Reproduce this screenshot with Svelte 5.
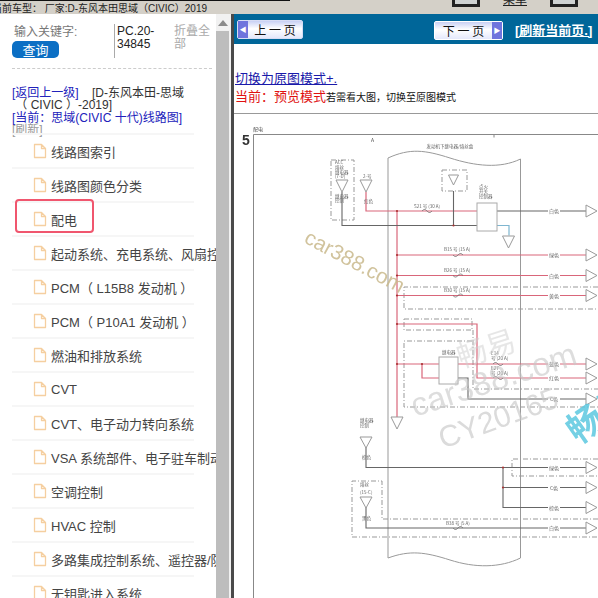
<script>
  const cjk = '"Noto Sans CJK SC"';
  const rows = [
    '线路图索引', '线路图颜色分类', '配电', '起动系统、充电系统、风扇控制系统', 'PCM（ L15B8 发动机 ）',
    'PCM（ P10A1 发动机 ）', '燃油和排放系统', 'CVT', 'CVT、电子动力转向系统', 'VSA 系统部件、电子驻车制动系统',
    '空调控制', 'HVAC 控制', '多路集成控制系统、遥控器/防盗系统', '无钥匙进入系统'
  ];
  const redRows = [
    { y: 133, l: '绿色', f: 'B15 号 (15 A)' },
    { y: 153.5, l: '白色', f: 'B26 号 (15 A)' },
    { y: 173.5, l: '黄色', f: 'B30 号 (15 A)' }
  ];
  const connectors = [89, 133, 153.5, 173.5, 242, 256, 277, 345.5, 365.5, 385.5, 406];
  const wireLabels = [
    { y: 89, t: '白色' }, { y: 133, t: '绿色' }, { y: 153.5, t: '白色' }, { y: 173.5, t: '黄色' },
    { y: 242, t: '蓝色' }, { y: 256, t: '红色' }, { y: 277, t: 'C色' }, { y: 345.5, t: '绿色' },
    { y: 365.5, t: 'C色' }, { y: 385.5, t: '棕色' }, { y: 406, t: '白色' }
  ];
  const drops = [
    [107, 58, 12, 6], [131, 58, 12, 6], [218.5, 53, 10, 5], [273.5, 114, 12, 6],
    [162, 295, 12, 6], [131, 315, 11, 6], [131, 375, 11, 6]
  ];
  const dots = [[162, 89], [218.5, 103.5], [162, 133], [162, 153.5], [162, 173.5], [162, 202], [162, 242], [187, 242], [268, 345.5], [268, 365.5]];
  const tiny = [
    [96, 42, 'ACC'], [96, 47, '熔丝'], [96, 52, '继电器'], [96, 56, '(7-D)'],
    [96, 76, '继电器'], [96, 80, '控制'], [124, 56, '2-号'], [125, 81, '红色'],
    [240, 66, '点火'], [240, 71, '开关'], [240, 76, '控制器'], [203, 232, '继电器'],
    [121, 300, '继电器'], [121, 305, '控制'], [123, 337, '棕色'], [121, 364, '熔丝'], [121, 372, '(15-C)'], [123, 398, '黑色']
  ];
</script>

<div class="page">
  <div class="topbar">
    <span class="topline"></span>
    <span class="crumb">当前车型： 厂家:D-东风本田思域（CIVIC）2019</span>
    <span class="tool"></span>
    <span class="menu">菜单</span>
    <span class="tool"></span>
  </div>

  <div class="main">
    <aside class="side">
      <div class="search">
        <div class="search-left">
          <span class="kw">输入关键字:</span>
          <button class="query">查询</button>
        </div>
        <div class="code">PC.20-34845</div>
        <div class="fold">折叠全部</div>
      </div>
      <div class="crumbs">
        <div><a href="#a" class="blue">[返回上一级]</a><span class="dark">&nbsp;&nbsp;&nbsp; [D-东风本田-思域<br />&nbsp;（ CIVIC ）-2019]</span></div>
        <div><a href="#a" class="blue">[当前：思域(CIVIC 十代)线路图]</a></div>
        <div class="refresh">[刷新]</div>
      </div>
      <ul class="list">
        {#each rows as r, i}
          <li class:current={i === 2}>
            <svg class="doc" width="14" height="16" viewBox="0 0 14 16">
              <path d="M1.500 1.500h7l4 4v9h-11z M8.500 1.500v4h4" fill="#fff" stroke="#f5cfa0" stroke-width="1.300" stroke-linejoin="round" />
            </svg>
            <span class="label">{r}</span>
          </li>
        {/each}
      </ul>
    </aside>

    <div class="scroll">
      <div class="up"><svg width="10" height="6" viewBox="0 0 10 6"><path d="M5 0l5 6H0z" fill="#8a8a8a" /></svg></div>
      <div class="thumb"></div>
    </div>
    <div class="rule"></div>

    <section class="content">
      <div class="nav">
        <div class="btn prev"><span class="arrow">◀</span><span class="btn-t">上 一 页</span></div>
        <div class="btn next"><span class="btn-t">下 一 页</span><span class="arrow">▶</span></div>
        <a class="reload" href="#a">[刷新当前页.]</a>
      </div>
      <a class="switch" href="#a">切换为原图模式+.</a>
      <div class="mode"><span class="red">当前：预览模式</span><span class="hint">若需看大图，切换至原图模式</span></div>
      <div class="hr"></div>

      <svg class="diagram" width="363" height="478" viewBox="0 0 363 478" font-family={cjk}>
        <g class="soft">
          <text x="18" y="9" font-size="5" fill="#555">配电</text>
          <text x="7" y="23" font-size="14" font-weight="700" fill="#333" font-family="Liberation Sans">5</text>
          <path d="M18.500 478V12.500H363M259 12.500v3" fill="none" stroke="#888" />
          <text x="136" y="20" font-size="5" fill="#555">A</text>
          <text x="215" y="26" font-size="4.500" fill="#666" text-anchor="middle">发动机下继电器/熔丝盒</text>

          <path d="M153 436V36C175 26 190 28 215 36S265 47 285.500 37V436C265 446 240 446 215 438S175 428 153 436z" fill="none" stroke="#999" />

          <g fill="none" stroke="#999" stroke-dasharray="5 2 1 2">
            <path d="M96 38h23v60H96z" />
            <path d="M207 48h25v21h-25z" />
            <path d="M363 165H169v22h194" />
            <path d="M169 197h68v11h-68z" />
            <path d="M238 208v59h125" />
            <path d="M237 219h-68v66h194" />
            <path d="M363 337h-86v17h86" />
            <path d="M363 397H147v-38h-30v56h246" />
          </g>

          <g fill="none" stroke="#d9667a" stroke-width="1.200">
            <path d="M131 70v19h112" />
            <path d="M162 89v206" />
            {#each redRows as r}
              <path d="M162 {r.y}H313M325 {r.y}h26" />
            {/each}
            <path d="M162 202h80v54h71M325 256h26" />
            <path d="M162 242h151M325 242h26M187 242v14h18" />
          </g>
          <g fill="none" stroke="#666" stroke-width="1.100">
            <path d="M107 70v33.500h136" />
            <path d="M218.500 69v34.500" />
            <path d="M262 89h51M325 89h26" />
            <path d="M223 256h10v21h80M325 277h26" />
            <path d="M131 325v20.500h182M325 345.500h26" />
            <path d="M268 345.500v40h45M268 365.500h45M325 365.500h26M325 385.500h26" />
            <path d="M131 385v21h182M325 406h26" />
          </g>
          <path d="M262 103.500h12v10" fill="none" stroke="#7fb6d0" stroke-width="1.200" />

          <g fill="#fff" stroke="#aaa">
            <rect x="242" y="81" width="20" height="28" />
            <rect x="204" y="235" width="19" height="27" />
          </g>

          <g fill="#fff" stroke="#999">
            {#each drops as d}
              <path d="M{d[0] - d[3]} {d[1]}h{d[3] * 2}l-{d[3]} {d[2]}z" />
            {/each}
            {#each connectors as y}
              <path d="M351 {y - 6}l11 6l-11 6z" />
            {/each}
          </g>

          <g fill="none" stroke="#666" stroke-width="0.800">
            <path d="M187 89c2-2 3-2 5 0s3 2 5 0" />
            <path d="M218 133c2 2 3 2 5 0s3-2 5 0" />
            <path d="M218 153.500c2 2 3 2 5 0s3-2 5 0" />
            <path d="M218 173.500c2 2 3 2 5 0s3-2 5 0" />
            <path d="M258 242c2-2 3-2 5 0s3 2 5 0" />
            <path d="M258 256c2-2 3-2 5 0s3 2 5 0" />
            <path d="M218 406c2 2 3 2 5 0s3-2 5 0" />
          </g>

          {#each dots as d}
            <circle cx={d[0]} cy={d[1]} r="1.100" fill="#a33" />
          {/each}

          <g font-size="4.500" fill="#666">
            <text x="179" y="86">S21 号 (30 A)</text>
            {#each redRows as r}
              <text x="209" y={r.y - 4}>{r.f}</text>
            {/each}
            <text x="256" y="233">E14</text>
            <text x="256" y="238">号 (20 A)</text>
            <text x="256" y="248">E27</text>
            <text x="256" y="253">号 (20 A)</text>
            <text x="211" y="403">B38 号 (5 A)</text>
            {#each tiny as t}
              <text x={t[0] + 4} y={t[1]}>{t[2]}</text>
            {/each}
            {#each wireLabels as w}
              <text x="319" y={w.y + 2} text-anchor="middle" font-size="5">{w.t}</text>
            {/each}
          </g>
        </g>

        <g font-family="Liberation Sans">
          <text x="68" y="120" font-size="21" fill="#c9b98c" opacity="0.850" transform="rotate(28 68 120)">car388.com</text>
          <text x="180" y="295" font-size="33" fill="#c8c8c8" opacity="0.600" transform="rotate(-18 180 295)">car388.com</text>
          <text x="208" y="327" font-size="30" fill="#c8c8c8" opacity="0.650" transform="rotate(-20 208 327)">CY20165</text>
        </g>
        <text x="226" y="246" font-size="30" fill="#cfcfcf" opacity="0.500" transform="rotate(-18 226 246)">畅易</text>
        <text x="343" y="323" font-size="36" font-weight="700" fill="#5cc8e0" opacity="0.850" transform="rotate(-35 343 323)">畅易</text>
      </svg>
    </section>
  </div>
</div>

<style>
  :global(body) { margin: 0; background: #fff; }
  .page {
    width: 598px; height: 598px; overflow: hidden; display: flex; flex-direction: column;
    font-family: "Liberation Sans", "Noto Sans CJK SC", sans-serif;
  }
  .topbar {
    height: 14px; flex: none; background: #d4d0c8; display: flex; align-items: flex-start;
    position: relative; overflow: hidden;
  }
  .topline { position: absolute; left: 0; top: 0; width: 290px; height: 1px; background: #111; }
  .crumb { font-size: 10px; line-height: 11px; padding-top: 3px; color: #222; white-space: nowrap; margin-left: -8px; width: 460px; flex: none; }
  .tool {
    width: 28px; height: 7px; background: #cfd2d2; box-sizing: border-box;
    border: 3px solid #222; border-top: 0; flex: none;
  }
  .menu { width: 70px; text-align: center; font-size: 12px; line-height: 13px; margin-top: -6px; color: #222; text-decoration: underline; flex: none; }
  .main { flex: 1; display: flex; min-height: 0; }

  .side { width: 216px; flex: none; overflow: hidden; background: #fff; position: relative; box-sizing: border-box; padding: 10px 4px 0 12px; }
  .search { display: flex; height: 34px; }
  .search-left { width: 102px; flex: none; position: relative; }
  .kw { position: absolute; left: 2px; top: 0; font-size: 12px; line-height: 17px; color: #777; white-space: nowrap; }
  .query {
    position: absolute; left: 0; top: 17px; width: 47px; height: 17px; border: 0; padding: 0; border-radius: 5px;
    background: #0b6fc4; color: #fff; font: 13px/17px "Noto Sans CJK SC", sans-serif;
  }
  .code { width: 58px; flex: none; border-left: 1px solid #aaa; box-sizing: border-box; padding-left: 2px; font-size: 12px; line-height: 13px; color: #222; word-break: break-word; padding-top: 1px; padding-right: 14px; }
  .fold { width: 38px; flex: none; font-size: 12px; line-height: 13px; color: #aaa; padding-top: 1px; margin-left: 2px; }
  .crumbs { margin-top: 10px; border-top: 1px dashed #ccc; padding-top: 18px; width: 200px; font-size: 12px; line-height: 12.300px; }
  .crumbs > div { width: 186px; }
  .blue { color: #2222bb; text-decoration: none; }
  .dark { color: #333; }
  .refresh { color: #999; }
  .list { list-style: none; margin: -3px 0 0; padding: 0; }
  .list li {
    height: 34px; box-sizing: border-box; width: 182px; border-top: 2px solid #f6f6f6; display: flex; align-items: center;
    padding-left: 21px; gap: 4px; white-space: nowrap; position: relative;
  }
  .doc { flex: none; }
  .label { font-size: 13px; color: #444; }
  .current::after {
    content: ""; position: absolute; left: 3px; top: -4px; width: 79px; height: 34px; border: 2px solid #f0566e; border-radius: 4px; box-sizing: border-box;
  }

  .scroll { width: 15px; flex: none; background: #f1f1f1; display: flex; flex-direction: column; }
  .up { height: 17px; display: flex; align-items: center; justify-content: center; background: #f1f1f1; padding-right: 2px; }
  .thumb { flex: 1; width: 13px; background: #bdbdbd; }
  .rule { width: 3px; flex: none; background: #4a4a4a; }

  .content { flex: 1; min-width: 0; overflow: hidden; display: flex; flex-direction: column; background: #fff; position: relative; }
  .nav { height: 30px; background: #006699; flex: none; position: relative; display: flex; align-items: center; }
  .btn {
    height: 19px; box-sizing: border-box; border: 1px solid #d8ddf5; border-radius: 2px; display: flex; align-items: center; justify-content: space-between;
    background: linear-gradient(180deg, #c8d0f4 0%, #ffffff 45%, #e4e8fb 100%); color: #111; font: 12px/17px "Noto Sans CJK SC", sans-serif;
  }
  .prev { width: 66px; margin-left: 3px; margin-top: 1px; }
  .next { width: 69px; margin-left: 131px; margin-top: 2px; border-color: #fff; }
  .btn-t { flex: 1; text-align: center; white-space: pre; }
  .arrow { width: 10px; align-self: stretch; background: #6f74dd; color: #fff; font-size: 7px; line-height: 17px; text-align: center; }
  .reload { margin-left: 12px; color: #fff; font-size: 13px; font-weight: 700; text-decoration: underline; white-space: nowrap; }
  .switch { margin-top: 26px; margin-left: 1px; font-size: 13px; line-height: 17px; color: #1a1aaa; text-decoration: underline; align-self: flex-start; }
  .mode { margin-left: 1px; line-height: 18px; white-space: nowrap; }
  .red { font-size: 13px; color: #e01010; }
  .hint { font-size: 10px; color: #111; }
  .hr { height: 1px; background: #999; margin-top: 6px; flex: none; }
  .diagram { display: block; flex: none; margin: 8px 0 0 1px; }
  .soft { filter: blur(0.350px); }
</style>
